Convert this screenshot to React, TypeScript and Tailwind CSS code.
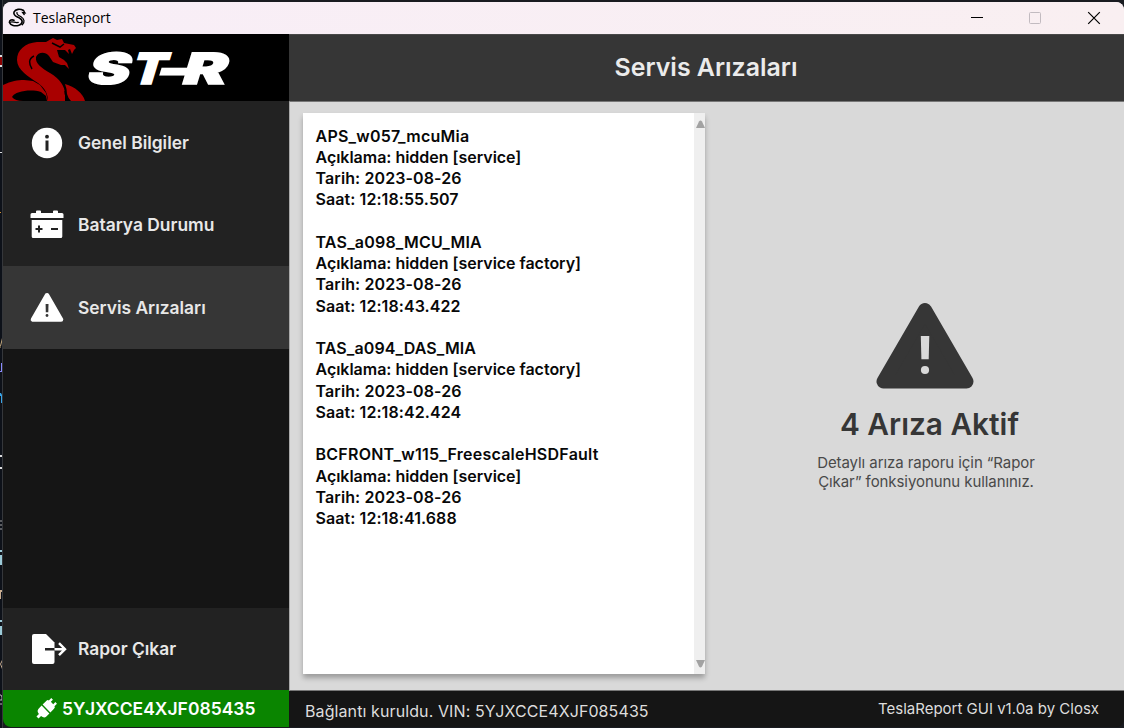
import React from "react";

type Fault = { code: string; description: string; time: string; spacing: string };

const faults: Fault[] = [
  { code: "APS_w057_mcuMia", description: "hidden [service]", time: "12:18:55.507", spacing: "tracking-[0.240px]" },
  { code: "TAS_a098_MCU_MIA", description: "hidden [service factory]", time: "12:18:43.422", spacing: "tracking-[0.200px]" },
  { code: "TAS_a094_DAS_MIA", description: "hidden [service factory]", time: "12:18:42.424", spacing: "tracking-[0.100px]" },
  { code: "BCFRONT_w115_FreescaleHSDFault", description: "hidden [service]", time: "12:18:41.688", spacing: "tracking-[0.240px]" },
];

function SnakeMark() {
  return (
    <svg width="20" height="20" viewBox="0 0 20 20" fill="none" stroke="#000" strokeLinecap="round">
      <path d="M15.500 2.500C12 .5 7.500 1 6 4C5 8 8.500 8.200 11.500 10c3.700 2 3.500 6-.5 7.200C7 18.500 2.500 17.500 1.400 14.500C1.300 12 4 11.300 6 12.300" strokeWidth="1.600" />
      <path d="M15.500 2.500l1.500 2.300-2.300-.3 1.500 2M9 4.500C8.300 6.700 10.700 7.500 13 8.700c3.500 2 4 5.500 1.300 8" strokeWidth="1.300" />
      <path d="M2.300 14.200c2.500-1.200 4.500 1 8 .2" strokeWidth="1.200" />
    </svg>
  );
}

function Logo() {
  return (
    <svg className="block" width="286" height="67" viewBox="0 0 286 67">
      <path fill="#a90000" d="M0 51C8 47 15 46 21 46L30 47L37 51L43 59L45 67H0Z" />
      <path fill="#000" d="M9 63C12 57 28 55 38 58L43 62L44 67H20Q12 67 9 63Z" />
      <path fill="#a90000" d="M45 67C45 60 42 54 35 49C26 43 14 36 14 26C14 16 22 9 34 8L43 8L50 4L54 6L59 5L61 9L71 11L73 14L71 16L69 20L67 15L65 16L66 20L62 16L54 16L56 23L61 26L64 29L66 35L62 31L58 31L50 28L46 22C42 17 35 18 33 23C32 30 39 34 47 39C57 45 62 52 62 61L62 67Z" />
      <path fill="#a90000" d="M62 50C72 53 80 59 82 67H68Q65 64 64 60Q64 55 62 50Z" />
      <path fill="none" stroke="#000" strokeWidth="1.500" d="M31 22C25 25 26 30 29 35M49 9L57 13L61 10" />
      <path fill="none" stroke="#000" strokeWidth="1.300" d="M62 57Q62 63 66 67" />
      <g fill="#fff" stroke="#fff" strokeWidth="1.400" fontFamily="Inter, sans-serif" fontSize="43" fontWeight="900">
        <text transform="translate(82 49.500) skewX(-17)" textLength="42" lengthAdjust="spacingAndGlyphs">S</text>
        <text transform="translate(126 49.500) skewX(-17)" textLength="34" lengthAdjust="spacingAndGlyphs">T</text>
        <text transform="translate(150 49.500) skewX(-17)" textLength="34" lengthAdjust="spacingAndGlyphs">-</text>
        <text transform="translate(177 49.500) skewX(-17)" textLength="44" lengthAdjust="spacingAndGlyphs">R</text>
      </g>
    </svg>
  );
}

function InfoIcon() {
  return (
    <svg width="36" height="36" viewBox="0 0 36 36">
      <circle cx="18" cy="18" r="15.200" fill="#fff" />
      <circle cx="18" cy="11.700" r="1.900" fill="#222" />
      <path d="M16.500 15.500h3v10.200h-3z" fill="#222" />
    </svg>
  );
}

function BatteryIcon() {
  return (
    <svg width="36" height="36" viewBox="0 0 36 36">
      <path fill="#fff" d="M7 6V4.500Q7 3.500 8 3.500h3q1 0 1 1V6h12V4.500q0-1 1-1h3q1 0 1 1V6h4q1.500 0 1.500 1.500V11H1.500V7.500Q1.500 6 3 6ZM2.700 13h30.600v16.500q0 1.500-1.500 1.500H4.200q-1.500 0-1.500-1.500Z" />
      <path stroke="#222" strokeWidth="2" d="M6.500 22h7M10 18.500v7M22 22h7" />
    </svg>
  );
}

function WarningIcon({ large = false }: { large?: boolean }) {
  return large ? (
    <svg width="98" height="88" viewBox="0 0 98 88">
      <path fill="#363636" stroke="#363636" strokeWidth="14" strokeLinejoin="round" d="M49 8L7.500 79.500h83Z" />
      <path fill="#d9d9d9" d="M44.800 34h8.500l-.6 23.200h-7.300Z" />
      <circle cx="49" cy="68" r="4.100" fill="#d9d9d9" />
    </svg>
  ) : (
    <svg width="36" height="36" viewBox="0 0 36 36">
      <path fill="#fff" stroke="#fff" strokeWidth="4.400" strokeLinejoin="round" d="M18 5.200L3.900 29.600h28.200Z" />
      <path fill="#363636" d="M16.600 14h2.900l-.2 8.200h-2.500Z" />
      <circle cx="18" cy="25.500" r="1.400" fill="#363636" />
    </svg>
  );
}

function ExportIcon() {
  return (
    <svg width="38" height="36" viewBox="0 0 38 36">
      <path fill="#fff" d="M5 3h12l8.500 8.500V31q0 2-2 2H5q-2 0-2-2V5q0-2 2-2Z" />
      <path fill="none" stroke="#222" strokeWidth="2.400" d="M16 18.200h10" />
      <path fill="none" stroke="#fff" strokeWidth="2.400" d="M25.500 18.200h10M30 12.200l6 6-6 6" />
    </svg>
  );
}

function PlugIcon() {
  return (
    <svg width="22" height="22" viewBox="0 0 22 22">
      <g transform="rotate(45 11 11)" fill="#fff">
        <path d="M5.500 10.300V5.500Q5.500 3 7 3V-.5h2.300V2.500h3.400V-.5H15V3Q16.500 3 16.500 5.500v4.800Z" />
        <path d="M5.500 11.700h11V16q0 3-4 3.500V23h-3v-3.500Q5.500 19 5.500 16Z" />
      </g>
    </svg>
  );
}

function NavItem({ icon, label, active = false }: { icon: React.ReactNode; label: string; active?: boolean }) {
  return (
    <button className={`flex w-full shrink-0 items-center pt-px pl-[25.500px] text-left text-[17.400px] font-semibold text-[#e8e8e8] ${active ? "h-[83px] bg-[#363636]" : "h-[82.500px] bg-[#222]"}`}>
      <span className="flex w-[49.500px] shrink-0">{icon}</span>
      <span className="whitespace-nowrap">{label}</span>
    </button>
  );
}

function EditorEdge() {
  return (
    <svg className="h-[728px] w-[3px] shrink-0 bg-[#0d1119]" width="3" height="728" viewBox="0 0 3 728">
      <path fill="#8b0000" d="M0 57h2v8H0z" />
      <path fill="#ddd" d="M0 55h3v2H0zM0 65h3v2H0zM0 152h3v1H0zM0 455h2v2H0zM0 467h2v2H0z" />
      <path fill="#d09030" d="M0 212h1v1H0z" />
      <path fill="none" stroke="#c9ad80" d="M.5 346L2.500 338M0 347h1" />
      <path fill="#8a8aff" d="M1 363h1v9H0v-1h1z" />
      <path fill="#38a5e8" d="M0 393h1l1 2v8H1v-7H0z" />
      <path fill="none" stroke="#aaa" d="M2.500 521H0M2.500 525H0M2.500 529H0" />
      <path fill="#9ccbd8" d="M0 550h2v2H0zM0 555h2v10H0zM0 620h2v2H0zM0 626h2v9H0z" />
      <path fill="#c9ad90" d="M0 590h2v2H1v7H0z" />
      <path fill="none" stroke="#c9ad90" d="M2.500 660L.5 664l2 5" />
      <path fill="none" stroke="#bbb" d="M0 695h1l1 2v3H0M0 704h2" />
      <path fill="#35373b" d="M2 0h1v728H2z" />
    </svg>
  );
}

export default function App() {
  return (
    <div className="flex h-[728px] w-[1124px] overflow-hidden bg-[#191b20] font-['Inter','Liberation_Sans',sans-serif]">
      <EditorEdge />
      <div className="mt-[2px] flex h-[725px] w-[1121px] flex-col overflow-hidden rounded-[8px] bg-[#151515]">
        <header className="flex h-8 shrink-0 items-center bg-[#f9eff4] bg-linear-to-r from-[#f8eef7] to-[#f9eff1] pl-[5px]">
          <SnakeMark />
          <span className="mb-[2px] ml-[5px] flex-1 font-['Open_Sans','Noto_Sans',sans-serif] text-[14px] text-black">TeslaReport</span>
          <svg width="156" height="32" viewBox="0 0 156 32" fill="none">
            <path d="M3 15.500h12" stroke="#000" />
            <rect x="61.500" y="10.500" width="11" height="11" rx="1" stroke="#c2bbc0" />
            <path d="M120.200 10.200l11.600 11.600M131.800 10.200l-11.600 11.600" stroke="#000" strokeWidth="1.200" />
          </svg>
        </header>
        <div className="flex min-h-0 flex-1">
          <aside className="flex w-[286px] shrink-0 flex-col bg-[#151515]">
            <div className="h-[67px] shrink-0 bg-black"><Logo /></div>
            <nav className="flex flex-1 flex-col">
              <NavItem icon={<InfoIcon />} label="Genel Bilgiler" />
              <NavItem icon={<BatteryIcon />} label="Batarya Durumu" />
              <NavItem icon={<WarningIcon />} label="Servis Arızaları" active />
            </nav>
            <NavItem icon={<ExportIcon />} label="Rapor Çıkar" />
            <div className="flex h-[37px] shrink-0 items-center bg-[#0a8500] pt-px pl-[32px] text-white">
              <PlugIcon />
              <span className="ml-[5px] text-[17.500px] font-semibold whitespace-nowrap">5YJXCCE4XJF085435</span>
            </div>
          </aside>
          <section className="flex min-w-0 flex-1 flex-col">
            <div className="flex h-[67px] shrink-0 items-center justify-center border-t border-[#484848] bg-[#363636] pr-px text-[24.900px] font-semibold text-[#ebebeb]">
              <h1>Servis Arızaları</h1>
            </div>
            <main className="flex min-h-0 flex-1 border-y border-l border-y-[#777] border-l-[#aaa] bg-[#d9d9d9]">
              <div className="mt-[11px] ml-[13px] flex h-[561px] w-[402px] shrink-0 bg-white shadow-[0_4px_5px_rgba(0,0,0,0.28)]">
                <div className="flex flex-1 flex-col gap-[21.270px] pt-[12.500px] pl-[12.500px] text-[16px] leading-[21.270px] font-semibold text-[#080808]">
                  {faults.map((f) => (
                    <article key={f.code} className="whitespace-nowrap">
                      <p className={f.spacing}>{f.code}</p>
                      <p className="tracking-[-0.020px]">Açıklama: {f.description}</p>
                      <p className="tracking-[0.100px]">Tarih: 2023-08-26</p>
                      <p className="tracking-[0.080px]">Saat: {f.time}</p>
                    </article>
                  ))}
                </div>
                <div className="flex w-[11px] shrink-0 flex-col items-end justify-between bg-[#efefef] pt-[7px] pb-[6px]">
                  <svg width="9" height="8" viewBox="0 0 9 8"><path fill="#a2a2a2" d="M0 8L3 1.500Q4.500-.500 6 1.500L9 8Z" /></svg>
                  <svg width="9" height="8" viewBox="0 0 9 8"><path fill="#a2a2a2" d="M0 0L3 6.500Q4.500 8.500 6 6.500L9 0Z" /></svg>
                </div>
              </div>
              <div className="ml-[22px] flex w-[396px] flex-col items-center pt-[200px] text-center text-[#363636]">
                <WarningIcon large />
                <h2 className="mt-[14px] ml-[9px] text-[29.800px] leading-[40px] font-semibold whitespace-nowrap">4 Arıza Aktif</h2>
                <p className="mt-[9px] ml-[2px] text-[15px] leading-[19px] tracking-[-0.070px] text-[#494949]">Detaylı arıza raporu için “Rapor<br />Çıkar” fonksiyonunu kullanınız.</p>
              </div>
            </main>
            <footer className="flex h-[36px] shrink-0 items-center justify-between bg-[#151515] pr-[25px] pl-[16px] text-[#ddd]">
              <span className="mt-[4px] text-[16px] tracking-[0.100px]">Bağlantı kuruldu. VIN: 5YJXCCE4XJF085435</span>
              <span className="text-[15px]">TeslaReport GUI v1.0a by Closx</span>
            </footer>
          </section>
        </div>
      </div>
    </div>
  );
}
